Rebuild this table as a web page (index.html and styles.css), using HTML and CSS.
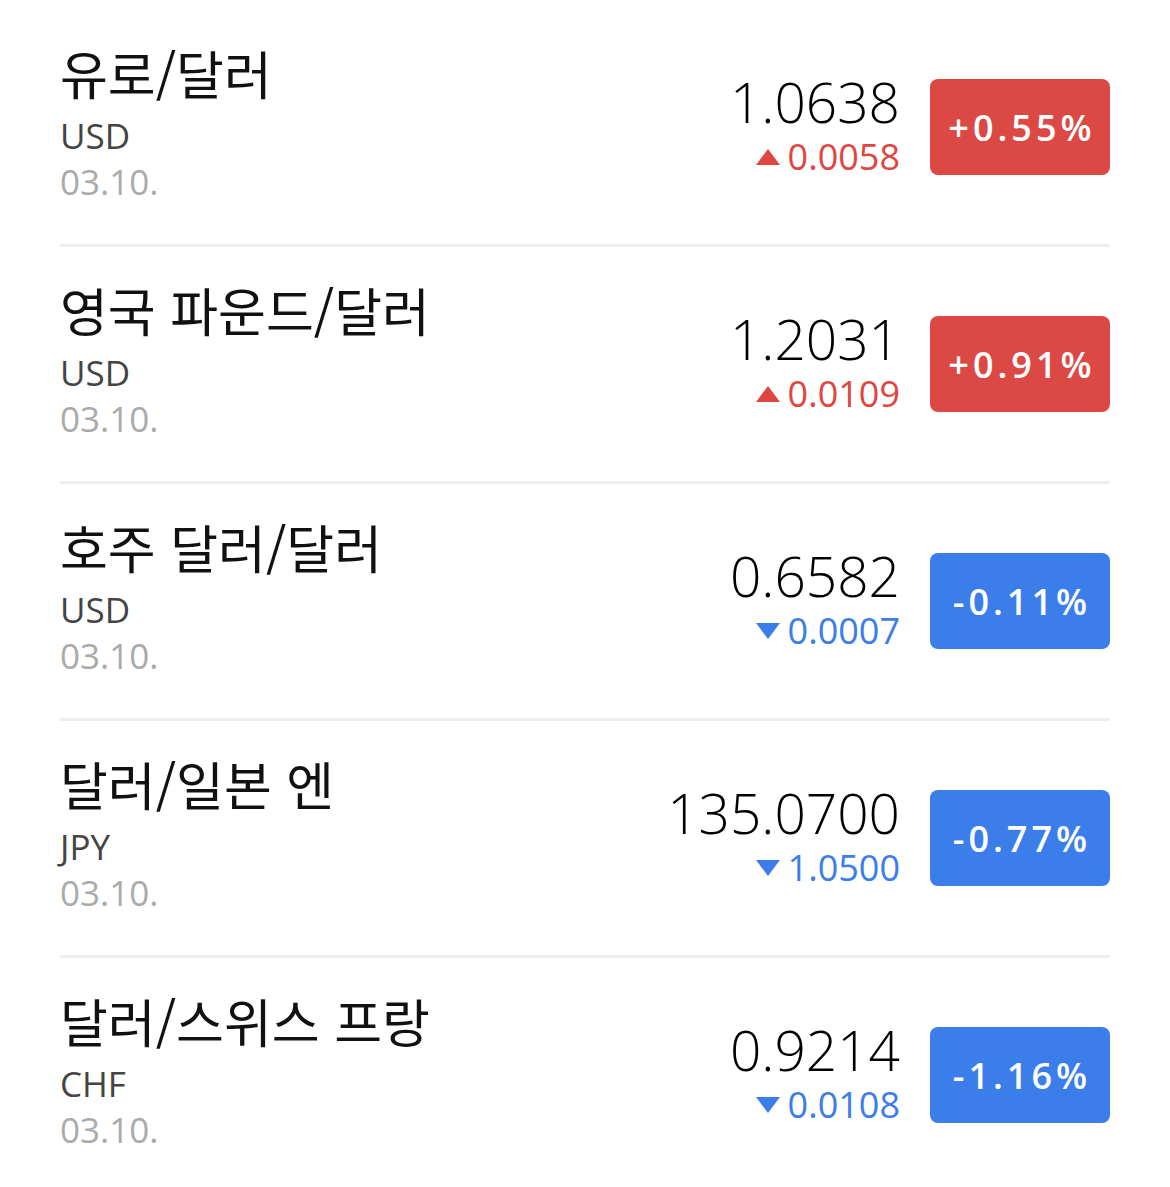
FILE: index.html
```html
<!DOCTYPE html>
<html lang="ko">
<head>
<meta charset="utf-8">
<link rel="stylesheet" href="styles.css">
</head>
<body>
<ul class="list">
  <li class="row">
    <div class="info">
      <div class="name">유로/달러</div>
      <div class="code">USD</div>
      <div class="date">03.10.</div>
    </div>
    <div class="quote">
      <div class="price">1.0638</div>
      <div class="change up"><span class="tri tri-up"></span>0.0058</div>
    </div>
    <div class="badge up">+0.55%</div>
  </li>
  <li class="row">
    <div class="info">
      <div class="name">영국 파운드/달러</div>
      <div class="code">USD</div>
      <div class="date">03.10.</div>
    </div>
    <div class="quote">
      <div class="price">1.2031</div>
      <div class="change up"><span class="tri tri-up"></span>0.0109</div>
    </div>
    <div class="badge up">+0.91%</div>
  </li>
  <li class="row">
    <div class="info">
      <div class="name">호주 달러/달러</div>
      <div class="code">USD</div>
      <div class="date">03.10.</div>
    </div>
    <div class="quote">
      <div class="price">0.6582</div>
      <div class="change down"><span class="tri tri-down"></span>0.0007</div>
    </div>
    <div class="badge down">-0.11%</div>
  </li>
  <li class="row">
    <div class="info">
      <div class="name">달러/일본 엔</div>
      <div class="code">JPY</div>
      <div class="date">03.10.</div>
    </div>
    <div class="quote">
      <div class="price">135.0700</div>
      <div class="change down"><span class="tri tri-down"></span>1.0500</div>
    </div>
    <div class="badge down">-0.77%</div>
  </li>
  <li class="row">
    <div class="info">
      <div class="name">달러/스위스 프랑</div>
      <div class="code">CHF</div>
      <div class="date">03.10.</div>
    </div>
    <div class="quote">
      <div class="price">0.9214</div>
      <div class="change down"><span class="tri tri-down"></span>0.0108</div>
    </div>
    <div class="badge down">-1.16%</div>
  </li>
</ul>
</body>
</html>
```
FILE: styles.css
```css
html, body {
  margin: 0;
  padding: 0;
  background: #fff;
}
body {
  font-family: "Open Sans", "Noto Sans CJK KR", sans-serif;
  color: #111;
}
.list {
  list-style: none;
  margin: 0;
  padding: 10px 60px 0;
}
.row {
  display: flex;
  align-items: center;
  height: 234px;
  border-bottom: 3px solid #eeeeee;
}
.row:last-child {
  border-bottom: none;
}
.info {
  flex: 1;
  display: flex;
  flex-direction: column;
  padding-bottom: 8px;
}
.name {
  font-family: "Noto Sans CJK KR", sans-serif;
  font-size: 52px;
  line-height: 62px;
  margin-bottom: 8px;
  color: #111;
}
.code {
  font-size: 35px;
  font-weight: 400;
  line-height: 47px;
  color: #444;
}
.date {
  font-size: 35px;
  font-weight: 400;
  line-height: 46px;
  color: #aaa;
}
.quote {
  display: flex;
  flex-direction: column;
  align-items: flex-end;
  margin-right: 30px;
  padding-bottom: 6px;
}
.price {
  font-size: 55px;
  font-weight: 300;
  line-height: 66px;
  color: #000;
}
.change {
  display: flex;
  align-items: center;
  font-size: 36px;
  font-weight: 400;
  line-height: 44px;
}
.change.up { color: #e0453f; }
.change.down { color: #3b7de9; }
.tri {
  width: 0;
  height: 0;
  margin-right: 8px;
  border-left: 12px solid transparent;
  border-right: 12px solid transparent;
}
.tri-up { border-bottom: 16px solid #e0453f; }
.tri-down { border-top: 16px solid #3b7de9; }
.badge {
  width: 180px;
  height: 96px;
  border-radius: 8px;
  display: flex;
  align-items: center;
  justify-content: center;
  color: #fff;
  font-size: 36px;
  font-weight: 600;
  letter-spacing: 4px;
  padding-left: 4px;
  box-sizing: border-box;
}
.badge.up { background: #dc4944; }
.badge.down { background: #3b7de9; }
```
